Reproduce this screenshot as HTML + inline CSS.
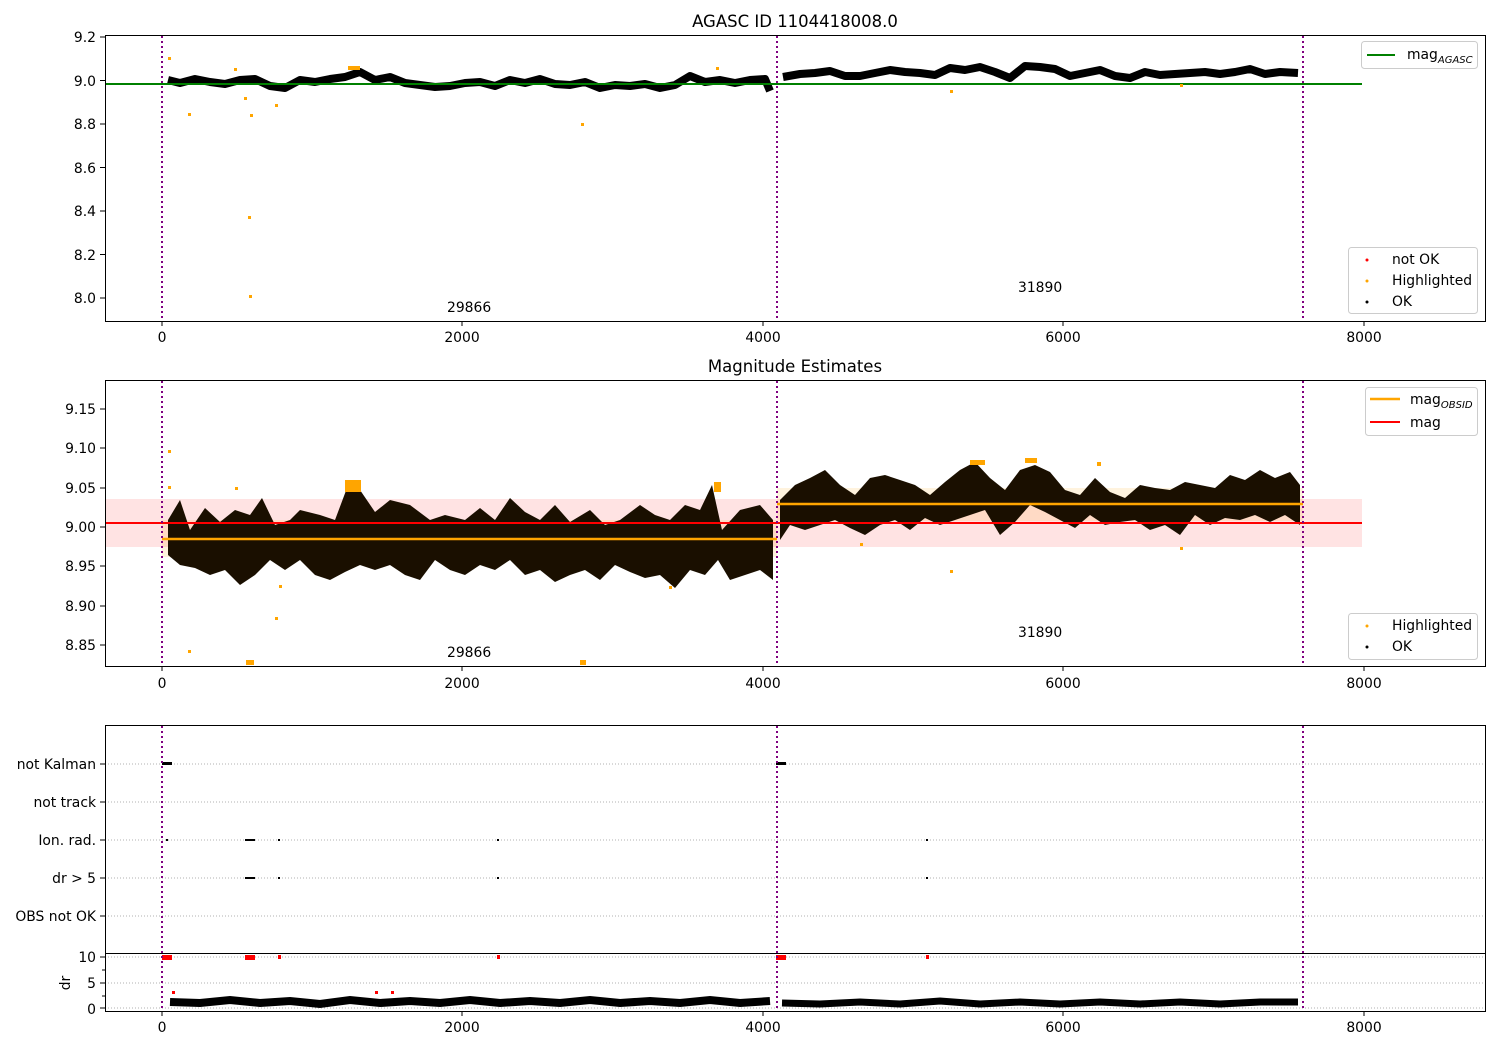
<!DOCTYPE html><html><head><style>body{margin:0;background:#fff}svg text{font-family:"DejaVu Sans","Liberation Sans",sans-serif;font-size:13.9px;fill:#000}</style></head><body>
<svg width="1500" height="1050" xmlns="http://www.w3.org/2000/svg">
<rect width="1500" height="1050" fill="#fff"/>
<!-- AXES 1 -->
<text x="795" y="27" text-anchor="middle" style="font-size:16.5px">AGASC ID 1104418008.0</text>
<g stroke="#000" stroke-linejoin="round" stroke-width="8" fill="none">
<polyline points="168,80 180,83 195,79 210,82 225,84 240,80 255,79 270,86 285,88 300,80 315,82 330,79 345,77 360,72 375,80 390,77 405,83 420,85 435,87 450,86 465,83 480,82 495,86 510,80 525,83 540,79 555,84 570,85 585,82 600,88 615,85 630,86 645,84 660,88 675,85 690,76 705,82 720,80 735,83 750,80 765,79 770,91"/>
<polyline points="783,77 800,74 815,73 830,71 845,76 860,76 875,73 890,70 905,72 920,73 935,75 950,68 965,70 980,67 995,72 1010,78 1025,66 1040,67 1055,69 1070,76 1085,73 1100,70 1115,76 1130,78 1145,72 1160,75 1175,74 1190,73 1205,72 1220,74 1235,72 1250,69 1265,74 1280,72 1298,73"/>
</g>
<line x1="105" y1="84" x2="1362" y2="84" stroke="#008000" stroke-width="2"/>
<g fill="#ffa500"><rect x="168" y="57" width="3" height="3"/><rect x="188" y="113" width="3" height="3"/><rect x="248" y="216" width="3" height="3"/><rect x="249" y="295" width="3" height="3"/><rect x="250" y="114" width="3" height="3"/><rect x="275" y="104" width="3" height="3"/><rect x="244" y="97" width="3" height="3"/><rect x="234" y="68" width="3" height="3"/><rect x="348" y="66" width="12" height="4"/><rect x="581" y="123" width="3" height="3"/><rect x="716" y="67" width="3" height="3"/><rect x="950" y="90" width="3" height="3"/><rect x="1180" y="84" width="3" height="3"/></g>
<g stroke="#800080" stroke-width="2" stroke-dasharray="2,3"><line x1="162" y1="36" x2="162" y2="321"/><line x1="777" y1="36" x2="777" y2="321"/><line x1="1303" y1="36" x2="1303" y2="321"/></g>
<text x="447" y="312">29866</text><text x="1018" y="292">31890</text>
<rect x="105.5" y="35.5" width="1380" height="286" fill="none" stroke="#000"/>
<g stroke="#000"><line x1="100" y1="37" x2="105" y2="37"/><line x1="100" y1="80.5" x2="105" y2="80.5"/><line x1="100" y1="124" x2="105" y2="124"/><line x1="100" y1="167.5" x2="105" y2="167.5"/><line x1="100" y1="211" x2="105" y2="211"/><line x1="100" y1="254.5" x2="105" y2="254.5"/><line x1="100" y1="298" x2="105" y2="298"/>
<line x1="162" y1="321" x2="162" y2="326"/><line x1="462" y1="321" x2="462" y2="326"/><line x1="763" y1="321" x2="763" y2="326"/><line x1="1063" y1="321" x2="1063" y2="326"/><line x1="1364" y1="321" x2="1364" y2="326"/></g>
<g text-anchor="end"><text x="96" y="42">9.2</text><text x="96" y="86">9.0</text><text x="96" y="129">8.8</text><text x="96" y="173">8.6</text><text x="96" y="216">8.4</text><text x="96" y="260">8.2</text><text x="96" y="303">8.0</text></g>
<g text-anchor="middle"><text x="162" y="342">0</text><text x="462" y="342">2000</text><text x="763" y="342">4000</text><text x="1063" y="342">6000</text><text x="1364" y="342">8000</text></g>
<rect x="1361.5" y="41.5" width="116" height="27" rx="3" fill="#fff" stroke="#ccc"/>
<line x1="1367" y1="55" x2="1395" y2="55" stroke="#008000" stroke-width="2"/><text x="1407" y="59">mag<tspan font-size="10" font-style="italic" dy="4">AGASC</tspan></text>
<rect x="1348.5" y="247.5" width="129" height="66" rx="3" fill="#fff" stroke="#ccc"/>
<circle cx="1367" cy="260" r="1.5" fill="red"/><text x="1392" y="264">not OK</text>
<circle cx="1367" cy="281" r="1.5" fill="#ffa500"/><text x="1392" y="285">Highlighted</text>
<circle cx="1367" cy="302" r="1.5" fill="#000"/><text x="1392" y="306">OK</text>

<!-- AXES 2 -->
<text x="795" y="372" text-anchor="middle" style="font-size:16.5px">Magnitude Estimates</text>
<rect x="105" y="499" width="1257" height="48" fill="#ff0000" fill-opacity="0.11"/>
<rect x="162" y="520" width="615" height="37" fill="#ffa500" fill-opacity="0.13"/>
<rect x="777" y="488" width="526" height="33" fill="#ffa500" fill-opacity="0.13"/>
<polygon fill="#1a0f00" points="168,520 180,500 190,530 205,508 220,522 235,510 250,515 262,498 275,525 290,520 300,510 320,515 335,520 350,480 360,490 375,512 390,500 410,505 430,520 445,515 465,520 480,508 495,520 510,498 525,512 540,520 555,505 570,522 590,510 605,525 620,520 640,505 655,515 670,520 685,505 700,510 712,485 722,530 740,510 760,505 773,520
773,580 760,570 745,575 730,580 718,560 705,575 690,570 675,588 660,575 645,578 630,572 615,565 600,580 585,570 570,575 555,582 540,570 525,575 510,560 495,570 480,565 465,575 450,570 435,560 420,580 405,575 390,565 375,570 360,565 345,572 330,580 315,575 300,560 285,570 270,560 255,575 240,585 225,570 210,575 195,568 180,565 168,555"/>
<polygon fill="#1a0f00" points="780,500 795,485 810,478 825,470 840,485 855,495 870,478 885,475 900,480 915,485 930,495 945,482 960,470 975,462 990,478 1005,490 1020,470 1035,465 1050,472 1065,490 1080,495 1095,478 1110,492 1125,498 1140,485 1155,488 1170,490 1185,482 1200,485 1215,488 1230,475 1245,480 1260,470 1275,478 1290,472 1300,485
1300,525 1285,515 1270,522 1255,515 1240,520 1225,518 1210,525 1195,515 1180,535 1165,525 1150,530 1135,520 1120,522 1105,525 1090,515 1075,528 1060,520 1045,512 1030,505 1015,522 1000,535 985,510 970,515 955,520 940,525 925,518 910,530 895,520 880,525 865,535 850,528 835,520 820,525 805,530 790,525 780,540"/>
<line x1="105" y1="523" x2="1362" y2="523" stroke="red" stroke-width="2"/>
<line x1="162" y1="539" x2="777" y2="539" stroke="#ffa500" stroke-width="2.5"/>
<line x1="777" y1="504" x2="1303" y2="504" stroke="#ffa500" stroke-width="2.5"/>
<g fill="#ffa500"><rect x="168" y="450" width="3" height="3"/><rect x="168" y="486" width="3" height="3"/><rect x="188" y="650" width="3" height="3"/><rect x="235" y="487" width="3" height="3"/><rect x="246" y="660" width="8" height="5"/><rect x="275" y="617" width="3" height="3"/><rect x="279" y="585" width="3" height="3"/><rect x="345" y="480" width="16" height="12"/><rect x="714" y="482" width="7" height="10"/><rect x="580" y="660" width="6" height="5"/><rect x="669" y="586" width="3" height="3"/><rect x="950" y="570" width="3" height="3"/><rect x="860" y="543" width="3" height="3"/><rect x="1180" y="547" width="3" height="3"/><rect x="970" y="460" width="15" height="5"/><rect x="1025" y="458" width="12" height="5"/><rect x="1097" y="462" width="4" height="4"/></g>
<g stroke="#800080" stroke-width="2" stroke-dasharray="2,3"><line x1="162" y1="381" x2="162" y2="666"/><line x1="777" y1="381" x2="777" y2="666"/><line x1="1303" y1="381" x2="1303" y2="666"/></g>
<text x="447" y="657">29866</text><text x="1018" y="637">31890</text>
<rect x="105.5" y="380.5" width="1380" height="286" fill="none" stroke="#000"/>
<g stroke="#000"><line x1="100" y1="409" x2="105" y2="409"/><line x1="100" y1="448" x2="105" y2="448"/><line x1="100" y1="488" x2="105" y2="488"/><line x1="100" y1="527" x2="105" y2="527"/><line x1="100" y1="566" x2="105" y2="566"/><line x1="100" y1="606" x2="105" y2="606"/><line x1="100" y1="645" x2="105" y2="645"/>
<line x1="162" y1="666" x2="162" y2="671"/><line x1="462" y1="666" x2="462" y2="671"/><line x1="763" y1="666" x2="763" y2="671"/><line x1="1063" y1="666" x2="1063" y2="671"/><line x1="1364" y1="666" x2="1364" y2="671"/></g>
<g text-anchor="end"><text x="96" y="414">9.15</text><text x="96" y="453">9.10</text><text x="96" y="493">9.05</text><text x="96" y="532">9.00</text><text x="96" y="571">8.95</text><text x="96" y="611">8.90</text><text x="96" y="650">8.85</text></g>
<g text-anchor="middle"><text x="162" y="688">0</text><text x="462" y="688">2000</text><text x="763" y="688">4000</text><text x="1063" y="688">6000</text><text x="1364" y="688">8000</text></g>
<rect x="1365.5" y="387.5" width="112" height="48" rx="3" fill="#fff" stroke="#ccc"/>
<line x1="1370" y1="399" x2="1400" y2="399" stroke="#ffa500" stroke-width="2.5"/><text x="1410" y="404">mag<tspan font-size="10" font-style="italic" dy="4">OBSID</tspan></text>
<line x1="1370" y1="422" x2="1400" y2="422" stroke="red" stroke-width="2"/><text x="1410" y="427">mag</text>
<rect x="1348.5" y="613.5" width="129" height="46" rx="3" fill="#fff" stroke="#ccc"/>
<circle cx="1367" cy="626" r="1.5" fill="#ffa500"/><text x="1392" y="630">Highlighted</text>
<circle cx="1367" cy="647" r="1.5" fill="#000"/><text x="1392" y="651">OK</text>

<!-- AXES 3 -->
<g stroke="#b0b0b0" stroke-dasharray="1,2"><line x1="105" y1="764" x2="1485" y2="764"/><line x1="105" y1="802" x2="1485" y2="802"/><line x1="105" y1="840" x2="1485" y2="840"/><line x1="105" y1="878" x2="1485" y2="878"/><line x1="105" y1="916" x2="1485" y2="916"/>
<line x1="105" y1="957" x2="1485" y2="957"/><line x1="105" y1="983" x2="1485" y2="983"/><line x1="105" y1="1008" x2="1485" y2="1008"/></g>
<g fill="#000"><rect x="162" y="762" width="10" height="3"/><rect x="776" y="762" width="10" height="3"/>
<rect x="166" y="839" width="2" height="2"/><rect x="245" y="839" width="10" height="2"/><rect x="278" y="839" width="2" height="2"/><rect x="497" y="839" width="2" height="2"/><rect x="926" y="839" width="2" height="2"/>
<rect x="245" y="877" width="10" height="2"/><rect x="278" y="877" width="2" height="2"/><rect x="497" y="877" width="2" height="2"/><rect x="926" y="877" width="2" height="2"/></g>
<g text-anchor="end"><text x="96" y="769">not Kalman</text><text x="96" y="807">not track</text><text x="96" y="845">Ion. rad.</text><text x="96" y="883">dr &gt; 5</text><text x="96" y="921">OBS not OK</text><text x="96" y="962">10</text><text x="96" y="988">5</text><text x="96" y="1014">0</text></g>
<text x="70" y="983" transform="rotate(-90 70 983)" text-anchor="middle">dr</text>
<g fill="red"><rect x="162" y="955" width="10" height="5"/><rect x="245" y="955" width="10" height="5"/><rect x="278" y="955" width="3" height="4"/><rect x="497" y="955" width="3" height="4"/><rect x="776" y="955" width="10" height="5"/><rect x="926" y="955" width="3" height="4"/><rect x="172" y="991" width="3" height="3"/><rect x="375" y="991" width="3" height="3"/><rect x="391" y="991" width="3" height="3"/></g>
<polyline fill="none" stroke="#000" stroke-width="8" points="170,1002 200,1003 230,1000 260,1003 290,1001 320,1004 350,1000 380,1003 410,1001 440,1003 470,1000 500,1003 530,1001 560,1003 590,1000 620,1003 650,1001 680,1003 710,1000 740,1003 770,1001"/>
<polyline fill="none" stroke="#000" stroke-width="7" points="782,1003 820,1004 860,1002 900,1004 940,1001 980,1004 1020,1002 1060,1004 1100,1002 1140,1004 1180,1002 1220,1004 1260,1002 1298,1002"/>
<g stroke="#800080" stroke-width="2" stroke-dasharray="2,3"><line x1="162" y1="726" x2="162" y2="1011"/><line x1="777" y1="726" x2="777" y2="1011"/><line x1="1303" y1="726" x2="1303" y2="1011"/></g>
<rect x="105.5" y="725.5" width="1380" height="286" fill="none" stroke="#000"/>
<line x1="105" y1="953.5" x2="1485" y2="953.5" stroke="#000"/>
<g stroke="#000"><line x1="100" y1="764" x2="105" y2="764"/><line x1="100" y1="802" x2="105" y2="802"/><line x1="100" y1="840" x2="105" y2="840"/><line x1="100" y1="878" x2="105" y2="878"/><line x1="100" y1="916" x2="105" y2="916"/><line x1="100" y1="957" x2="105" y2="957"/><line x1="100" y1="983" x2="105" y2="983"/><line x1="100" y1="1008" x2="105" y2="1008"/><line x1="102" y1="970" x2="105" y2="970"/><line x1="102" y1="996" x2="105" y2="996"/>
<line x1="162" y1="1011" x2="162" y2="1016"/><line x1="462" y1="1011" x2="462" y2="1016"/><line x1="763" y1="1011" x2="763" y2="1016"/><line x1="1063" y1="1011" x2="1063" y2="1016"/><line x1="1364" y1="1011" x2="1364" y2="1016"/></g>
<g text-anchor="middle"><text x="162" y="1032">0</text><text x="462" y="1032">2000</text><text x="763" y="1032">4000</text><text x="1063" y="1032">6000</text><text x="1364" y="1032">8000</text></g>
</svg></body></html>
